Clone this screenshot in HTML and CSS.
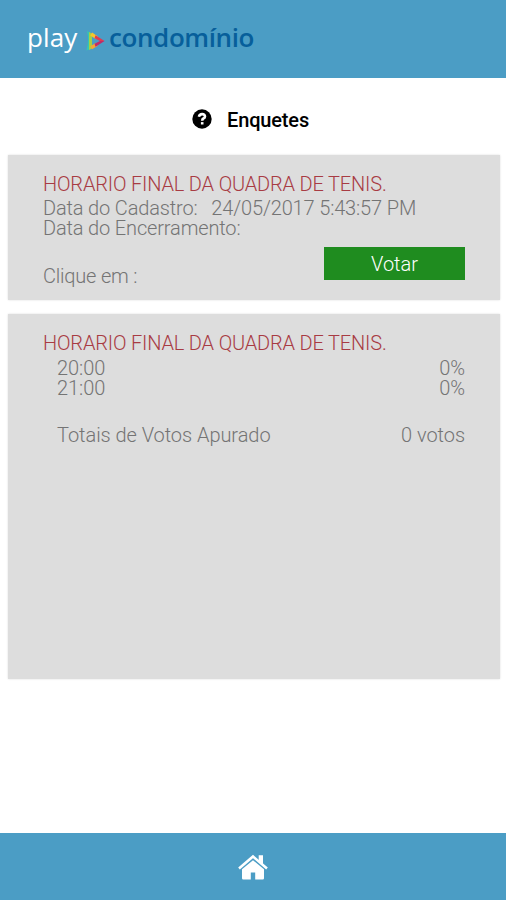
FILE: index.html
```html
<!DOCTYPE html>
<html lang="pt-BR">
<head>
<meta charset="utf-8">
<title>Play Condomínio - Enquetes</title>
<link rel="stylesheet" href="styles.css">
</head>
<body>
<header class="topbar">
  <span class="logo-play">play</span>
  <svg class="logo-mark" width="20" height="22" viewBox="0 0 20 22">
    <path d="M1 1 Q3.4 10 0.4 20.5 L3.5 19.5 V2.4Z" fill="#35c5b4"/>
    <path d="M3 2 L6 3.6 V18.6 L3 20Z" fill="#a4cf45"/>
    <path d="M5.2 4 L11 7.8" fill="none" stroke="#f5c52e" stroke-width="3.4"/>
    <path d="M5.2 17.8 L11 14.3" fill="none" stroke="#f5a535" stroke-width="3.4"/>
    <path d="M9.5 5.2 L18.6 11 H14 L8.5 8.2Z" fill="#e23a50"/>
    <path d="M9.5 16.8 L18.6 11 H14 L8.5 13.8Z" fill="#c02a68"/>
  </svg>
  <span class="logo-name">condomínio</span>
</header>
<main class="content">
  <h1 class="page-title">
    <svg class="help" width="20" height="20" viewBox="0 0 20 20">
      <circle cx="10" cy="10" r="9.7" fill="#000"/>
      <path d="M6.9 7.7 Q7.5 5.1 10.1 5.1 Q13 5.1 13 7.4 Q13 8.8 11.4 9.5 Q10.2 10.1 10.2 11.8" fill="none" stroke="#fff" stroke-width="2.6"/>
      <path d="M8.9 13.1h2.6v2.4H8.9z" fill="#fff"/>
    </svg>
    <span>Enquetes</span>
  </h1>
  <section class="card poll">
    <div class="poll-info">
      <h2 class="question">HORARIO FINAL DA QUADRA DE TENIS.</h2>
      <p class="line">Data do Cadastro: <span class="date">24/05/2017 5:43:57 PM</span></p>
      <p class="line">Data do Encerramento:</p>
    </div>
    <div class="vote-row">
      <span class="hint">Clique em :</span>
      <button class="vote">Votar</button>
    </div>
  </section>
  <section class="card results">
    <h2 class="question">HORARIO FINAL DA QUADRA DE TENIS.</h2>
    <div class="row"><span>20:00</span><span>0%</span></div>
    <div class="row"><span>21:00</span><span>0%</span></div>
    <div class="row total"><span>Totais de Votos Apurado</span><span>0 votos</span></div>
  </section>
</main>
<footer class="bottombar">
  <svg class="home" width="32" height="27" viewBox="0 0 32 27">
    <path d="M16 6.2 L27 15.3 V24.2 Q27 25.5 25.7 25.5 H18.2 V18.5 H13.8 V25.5 H6.3 Q5 25.5 5 24.2 V15.3 Z" fill="#fff"/>
    <path d="M21.7 1.2H26V11L21.7 7.7Z" fill="#fff"/>
    <path d="M2 14.5 L16 2.5 L30 14.5" fill="none" stroke="#fff" stroke-width="2.5"/>
  </svg>
</footer>
</body>
</html>
```
FILE: styles.css
```css
* { box-sizing: border-box; }
body {
  margin: 0;
  height: 900px;
  display: flex;
  flex-direction: column;
  background: #fff;
  color: #747474;
  font: 300 20px/20px Roboto, sans-serif;
}
h1, h2, p { margin: 0; }
.topbar {
  height: 78px;
  flex: none;
  display: flex;
  align-items: center;
  padding: 0 0 4px 27px;
  background: #4b9dc5;
  font-family: "Open Sans", sans-serif;
  font-size: 26px;
  line-height: 36px;
}
.logo-play { width: 59px; color: #fff; font-weight: 400; letter-spacing: 0.1px; }
.logo-mark { margin-top: 8px; }
.logo-name { margin-left: 3px; color: #075f9b; font-weight: 600; letter-spacing: -0.4px; }
.content { flex: 1; padding: 0 6px 0 8px; }
.page-title {
  height: 77px;
  display: flex;
  align-items: center;
  padding: 7px 0 0 184px;
  gap: 15px;
  color: #000;
  font-size: 20px;
  font-weight: 500;
  letter-spacing: -0.15px;
}
.help { margin-top: -2px; }
.card { background: #ddd; padding: 18px 35px 0; box-shadow: 0 0 2px #ddd; }
.poll { height: 144.5px; margin-bottom: 14.5px; }
.results { height: 365px; }
.question {
  color: #a83b43;
  font-size: 20px;
  line-height: 22px;
  font-weight: 300;
  letter-spacing: -0.17px;
  margin-bottom: 4px;
}
.line { line-height: 20px; letter-spacing: -0.15px; }
.poll .question { margin-bottom: 3px; }
.date { margin-left: 9px; }
.vote-row { display: flex; justify-content: space-between; margin-top: 8.5px; }
.hint { padding-top: 19px; letter-spacing: -0.2px; }
.vote {
  width: 141px;
  height: 33.5px;
  border: 0;
  padding: 0;
  background: #1f8c1f;
  color: #fff;
  font: 300 20px/34px Roboto, sans-serif;
}
.row { display: flex; justify-content: space-between; line-height: 20px; padding-left: 14px; letter-spacing: -0.05px; }
.total { margin-top: 27px; }
.bottombar {
  height: 67px;
  flex: none;
  display: flex;
  align-items: center;
  justify-content: center;
  background: #4b9dc5;
}
.home { margin-top: 1px; }
```
